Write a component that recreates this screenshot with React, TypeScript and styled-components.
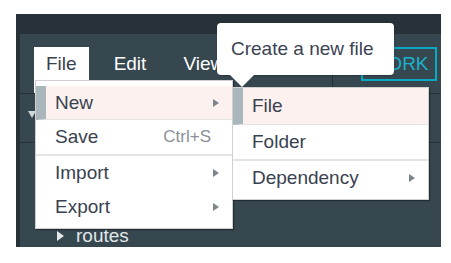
import styled, { createGlobalStyle } from "styled-components";

const GlobalStyle = createGlobalStyle`
  body {
    margin: 0;
    background: #ffffff;
    font-family: "Liberation Sans", Arial, sans-serif;
  }
`;

const Frame = styled.div`
  position: relative;
  width: 425px;
  height: 233px;
  margin: 14px 0 0 16px;
  background: #37474f;
  display: flex;
  flex-direction: column;
  overflow: hidden;
`;

const TopStrip = styled.div`
  height: 20px;
  background: #263238;
`;

const Body = styled.div`
  flex: 1;
  display: flex;
`;

const LeftStrip = styled.div`
  width: 4px;
  background: #263238;
`;

const Main = styled.div`
  flex: 1;
  display: flex;
  flex-direction: column;
`;

const MenuBar = styled.div`
  height: 59px;
  display: flex;
  border-bottom: 1px solid #263238;
`;

const Tabs = styled.div`
  flex: 1;
  display: flex;
  gap: 13px;
  padding: 13px 0 0 14px;
`;

const Tab = styled.div<{ $active?: boolean }>`
  padding: 0 12px;
  height: ${(p) => (p.$active ? "46px" : "34px")};
  line-height: 34px;
  font-size: 19px;
  color: ${(p) => (p.$active ? "#39414f" : "#ffffff")};
  background: ${(p) => (p.$active ? "#ffffff" : "transparent")};
`;

const RightTools = styled.div`
  width: 104px;
  border-left: 1px solid #263238;
  display: flex;
  justify-content: flex-end;
  padding: 13px 4px 0 0;
`;

const WorkButton = styled.div`
  width: 72px;
  height: 30px;
  border: 2px solid #0aa9c4;
  color: #19b1cb;
  font-size: 19px;
  display: flex;
  align-items: center;
  justify-content: center;
`;

const SubBar = styled.div`
  height: 49px;
  border-bottom: 1px solid #263238;
  display: flex;
  align-items: center;
  padding: 0 0 8px 8px;
  box-sizing: border-box;
`;

const DownCaret = styled.span`
  width: 0;
  height: 0;
  border-left: 4px solid transparent;
  border-right: 4px solid transparent;
  border-top: 7px solid #cfd8dc;
`;

const Tree = styled.div`
  flex: 1;
  display: flex;
  flex-direction: column;
  justify-content: flex-end;
  padding-left: 37px;
`;

const TreeRow = styled.div`
  display: flex;
  align-items: center;
  gap: 12px;
  height: 22px;
  font-size: 19px;
  color: #e3e8eb;
`;

const RightCaret = styled.span<{ $color?: string; $size?: number }>`
  width: 0;
  height: 0;
  border-top: ${(p) => p.$size ?? 4}px solid transparent;
  border-bottom: ${(p) => p.$size ?? 4}px solid transparent;
  border-left: ${(p) => (p.$size ?? 4) * 1.5}px solid ${(p) => p.$color ?? "#7d858c"};
`;

const Menu = styled.div<{ $left: number; $top: number; $width: number; $padTop: number }>`
  position: absolute;
  left: ${(p) => p.$left}px;
  top: ${(p) => p.$top}px;
  width: ${(p) => p.$width}px;
  padding: ${(p) => p.$padTop}px 0 4px;
  box-sizing: border-box;
  background: #ffffff;
  border: 1px solid #d0d0d0;
  box-shadow: 1px 1px 1px rgba(0, 0, 0, 0.35);
  display: flex;
  flex-direction: column;
`;

const Item = styled.div<{ $active?: boolean; $h?: number }>`
  display: flex;
  align-items: center;
  height: ${(p) => p.$h ?? 33}px;
  padding: 0 13px 0 9px;
  font-size: 19px;
  color: #39414f;
  background: ${(p) => (p.$active ? "#fcf1ef" : "transparent")};
  border-left: 10px solid ${(p) => (p.$active ? "#a9b7bd" : "transparent")};
  border-bottom: 1px solid ${(p) => (p.$active ? "#e4e4e4" : "transparent")};
`;

const Label = styled.span`
  flex: 1;
`;

const Shortcut = styled.span`
  font-size: 17px;
  color: #8a9096;
  margin-right: 8px;
`;

const Separator = styled.div`
  height: 2px;
  background: #e4e4e4;
`;

const Tooltip = styled.div`
  position: absolute;
  left: 201px;
  top: 9px;
  width: 177px;
  height: 52px;
  box-sizing: border-box;
  padding-left: 14px;
  display: flex;
  align-items: center;
  background: #ffffff;
  border-radius: 4px;
  box-shadow: 0 1px 2px rgba(0, 0, 0, 0.25);
  font-size: 19px;
  color: #3b4352;

  &::after {
    content: "";
    position: absolute;
    left: 13px;
    top: 52px;
    border-left: 12px solid transparent;
    border-right: 12px solid transparent;
    border-top: 12px solid #ffffff;
  }
`;

export default function App() {
  return (
    <>
      <GlobalStyle />
      <Frame>
        <TopStrip />
        <Body>
          <LeftStrip />
          <Main>
            <MenuBar>
              <Tabs>
                <Tab $active>File</Tab>
                <Tab>Edit</Tab>
                <Tab>View</Tab>
              </Tabs>
              <RightTools>
                <WorkButton>WORK</WorkButton>
              </RightTools>
            </MenuBar>
            <SubBar>
              <DownCaret />
            </SubBar>
            <Tree>
              <TreeRow>
                <RightCaret $color="#e3e8eb" $size={5} />
                routes
              </TreeRow>
            </Tree>
          </Main>
        </Body>

        <Menu $left={19} $top={66} $width={198} $padTop={5}>
          <Item $active>
            <Label>New</Label>
            <RightCaret />
          </Item>
          <Item>
            <Label>Save</Label>
            <Shortcut>Ctrl+S</Shortcut>
          </Item>
          <Separator />
          <Item>
            <Label>Import</Label>
            <RightCaret />
          </Item>
          <Item>
            <Label>Export</Label>
            <RightCaret />
          </Item>
        </Menu>

        <Menu $left={216} $top={73} $width={197} $padTop={0}>
          <Item $active $h={36}>
            <Label>File</Label>
          </Item>
          <Item>
            <Label>Folder</Label>
          </Item>
          <Separator />
          <Item>
            <Label>Dependency</Label>
            <RightCaret />
          </Item>
        </Menu>

        <Tooltip>Create a new file</Tooltip>
      </Frame>
    </>
  );
}
